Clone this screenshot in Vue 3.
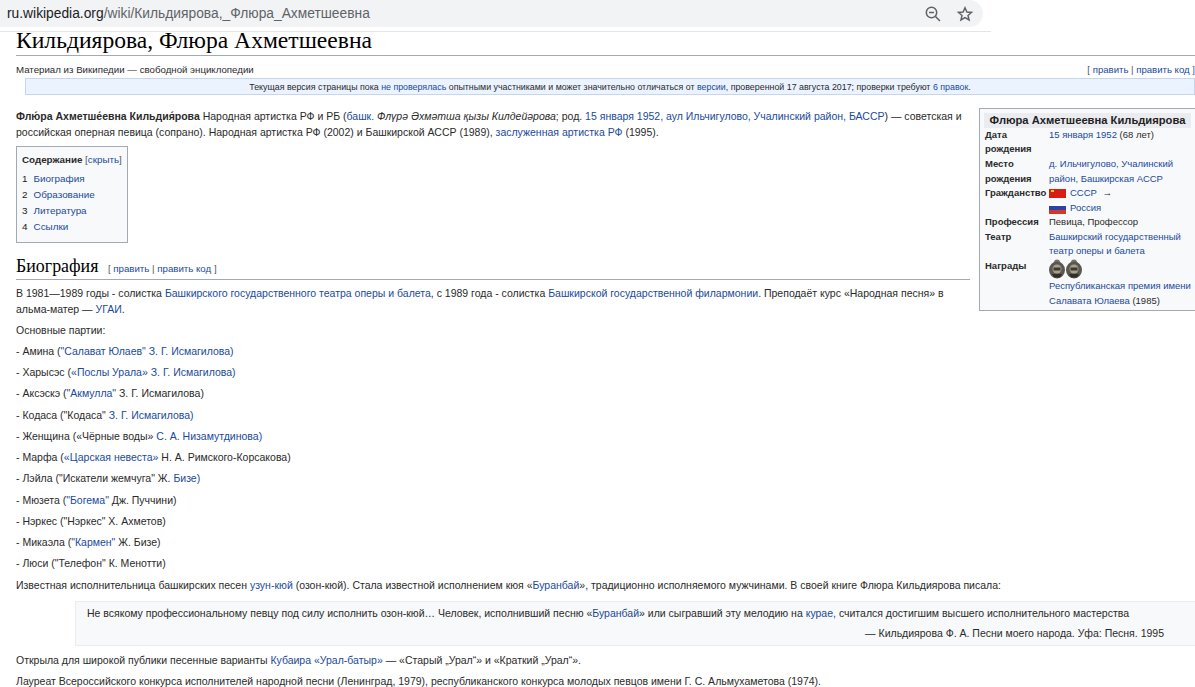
<script setup>
const toc = ['Биография', 'Образование', 'Литература', 'Ссылки']

// партии: before, link, after
const roles = [
  ['- Амина (', '"Салават Юлаев" З. Г. Исмагилова)', ''],
  ['- Харысэс (', '«Послы Урала» З. Г. Исмагилова)', ''],
  ['- Аксэскэ (', '"Акмулла"', ' З. Г. Исмагилова)'],
  ['- Кодаса ("Кодаса" ', 'З. Г. Исмагилова)', ''],
  ['- Женщина («Чёрные воды» ', 'С. А. Низамутдинова)', ''],
  ['- Марфа (', '«Царская невеста»', ' Н. А. Римского-Корсакова)'],
  ['- Лэйла ("Искатели жемчуга" Ж. ', 'Бизе)', ''],
  ['- Мюзета (', '"Богема"', ' Дж. Пуччини)'],
  ['- Нэркес ("Нэркес" Х. Ахметов)', '', ''],
  ['- Микаэла (', '"Кармен"', ' Ж. Бизе)'],
  ['- Люси ("Телефон" К. Менотти)', '', '']
]
</script>

<template>
  <div class="page">
    <div class="urlrow">
      <div class="urlbar">
        <span class="url"><b>ru.wikipedia.org</b>/wiki/Кильдиярова,_Флюра_Ахметшеевна</span>
        <svg class="icon" width="18" height="18" viewBox="0 0 18 18" fill="none" stroke="#5f6368" stroke-width="1.5">
          <circle cx="7.5" cy="7.5" r="5.2" />
          <path d="M11.5 11.5 16 16M5 7.5h5" />
        </svg>
        <svg class="icon star" width="18" height="18" viewBox="0 0 18 18" fill="none" stroke="#5f6368" stroke-width="1.5">
          <path d="M9 2.8l1.9 4.2 4.6.45-3.5 3 1.05 4.5L9 12.55l-4.05 2.4L6 10.45l-3.5-3 4.6-.45z" />
        </svg>
      </div>
    </div>

    <div class="content">
      <h1>Кильдиярова, Флюра Ахметшеевна</h1>
      <div class="subrow">
        <span>Материал из Википедии — свободной энциклопедии</span>
        <span class="edit">[ <a>править</a> | <a>править код</a> ]</span>
      </div>
      <div class="notice">
        Текущая версия страницы пока <a>не проверялась</a> опытными участниками и может значительно отличаться от <a>версии</a>, проверенной 17 августа 2017; проверки требуют <a>6 правок</a>.
      </div>

      <div class="infobox">
        <div class="ib-title">Флюра Ахметшеевна Кильдиярова</div>
        <div class="ib-grid">
          <b>Дата рождения</b>
          <div><a>15 января 1952</a> (68 лет)</div>
          <b>Место рождения</b>
          <div><a>д. Ильчигулово, Учалинский район, Башкирская АССР</a></div>
          <b>Гражданство</b>
          <div>
            <div class="flagrow">
              <svg class="flag" width="17" height="9" viewBox="0 0 17 9">
                <rect width="17" height="9" fill="#d81e12" />
                <rect x="2" y="1" width="3" height="2" fill="#f2c230" />
              </svg>
              <a>СССР</a>&nbsp;→
            </div>
            <div class="flagrow">
              <svg class="flag" width="17" height="12" viewBox="0 0 17 12">
                <rect width="17" height="12" fill="#fff" stroke="#e4e4e4" stroke-width="0.5" />
                <rect y="4" width="17" height="4" fill="#2a45a8" />
                <rect y="8" width="17" height="4" fill="#d8352a" />
              </svg>
              <a>Россия</a>
            </div>
          </div>
          <b>Профессия</b>
          <div>Певица, Профессор</div>
          <b>Театр</b>
          <div><a>Башкирский государственный театр оперы и балета</a></div>
          <b>Награды</b>
          <div>
            <div class="medals">
              <svg v-for="n in 2" :key="n" width="16" height="20" viewBox="0 0 16 20">
                <circle cx="8" cy="3.5" r="3" fill="#77766c" />
                <ellipse cx="8" cy="11" rx="8" ry="8.5" fill="#5a5850" />
                <circle cx="8" cy="10" r="4.5" fill="#a89f8a" />
                <rect x="4.5" y="8.5" width="7" height="3" fill="#3c3a34" />
                <path d="M3 15h10l-2 3.5H5z" fill="#2f2e2a" />
              </svg>
            </div>
            <a>Республиканская премия имени Салавата Юлаева</a> (1985)
          </div>
        </div>
      </div>

      <p class="lead">
        <b>Флю́ра Ахметше́евна Кильдия́рова</b> Народная артистка РФ и РБ (<a>башк.</a> <i>Флүрә Әхмәтша қызы Килдейәрова</i>; род. <a>15 января 1952, аул Ильчигулово, Учалинский район, БАССР</a>) — советская и российская оперная певица (сопрано). Народная артистка РФ (2002) и Башкирской АССР (1989), <a>заслуженная артистка РФ</a> (1995).
      </p>

      <div class="toc">
        <div class="toc-title"><b>Содержание</b> <span class="toggle">[<a>скрыть</a>]</span></div>
        <div v-for="(item, i) in toc" :key="item" class="toc-item">
          <span class="num">{{ i + 1 }}</span><a>{{ item }}</a>
        </div>
      </div>

      <h2>Биография <span class="edit">[ <a>править</a> | <a>править код</a> ]</span></h2>

      <p class="tight">В 1981—1989 годы - солистка <a>Башкирского государственного театра оперы и балета</a>, с 1989 года - солистка <a>Башкирской государственной филармонии</a>. Преподаёт курс «Народная песня» в альма-матер — <a>УГАИ</a>.</p>
      <p>Основные партии:</p>
      <p v-for="r in roles" :key="r[0]">{{ r[0] }}<a>{{ r[1] }}</a>{{ r[2] }}</p>
      <p>Известная исполнительница башкирских песен <a>узун-кюй</a> (озон-кюй). Стала известной исполнением кюя «<a>Буранбай</a>», традиционно исполняемого мужчинами. В своей книге Флюра Кильдиярова писала:</p>

      <div class="quote">
        <div>Не всякому профессиональному певцу под силу исполнить озон-кюй… Человек, исполнивший песню «<a>Буранбай</a>» или сыгравший эту мелодию на <a>курае,</a> считался достигшим высшего исполнительного мастерства</div>
        <div class="source">— Кильдиярова Ф. А. Песни моего народа. Уфа: Песня. 1995</div>
      </div>

      <p>Открыла для широкой публики песенные варианты <a>Кубаира</a> <a>«Урал-батыр»</a> — «Старый „Урал“» и «Краткий „Урал“».</p>
      <p>Лауреат Всероссийского конкурса исполнителей народной песни (Ленинград, 1979), республиканского конкурса молодых певцов имени Г. С. Альмухаметова (1974).</p>
    </div>
  </div>
</template>

<style scoped>
.page {
  height: 687px;
  overflow: hidden;
  font-family: "Liberation Sans", Arial, sans-serif;
  font-size: 10.5px;
  line-height: 16px;
  color: #2a2a2a;
}

a {
  color: #1a4a9c;
}

.urlrow {
  width: 991px;
  height: 31px;
  border-bottom: 1px solid #e4e5e7;
}

.urlbar {
  width: 983px;
  height: 27px;
  background: #f1f3f4;
  border-radius: 0 14px 14px 0;
  display: flex;
  align-items: center;
  padding: 0 9px 0 7px;
  box-sizing: border-box;
  gap: 14px;
}

.url {
  flex: 1;
  font-size: 13.8px;
  color: #5f6368;
}

.url b {
  font-weight: normal;
  color: #202124;
}

.content {
  padding-left: 16px;
}

h1 {
  margin: -2px 0 0;
  font-family: "Liberation Serif", serif;
  font-weight: normal;
  font-size: 23.6px;
  line-height: 21px;
  height: 25px;
  color: #000;
  border-bottom: 1px solid #a2a9b1;
}

.subrow {
  display: flex;
  justify-content: space-between;
  font-size: 9.7px;
  line-height: 13px;
  margin-top: 7px;
}

.edit {
  font-size: 9.6px;
  color: #54595d;
}

.notice {
  margin: 2px 0 0 9px;
  height: 17px;
  line-height: 16px;
  background: #eaf3ff;
  border: 1px solid #c8d6ea;
  box-sizing: border-box;
  text-align: center;
  font-size: 8.85px;
}

.infobox {
  float: right;
  width: 216px;
  box-sizing: border-box;
  margin: 13px 0 0 9px;
  border: 1px solid #a2a9b1;
  border-right: none;
  background: #f8f9fa;
  padding: 4px 4px 2px 4px;
  font-size: 9.5px;
  line-height: 14.4px;
}

.ib-title {
  background: #eaecf0;
  font-weight: bold;
  font-size: 11.2px;
  line-height: 15px;
  text-align: center;
  white-space: nowrap;
  color: #222;
}

.ib-grid {
  display: grid;
  grid-template-columns: 60px 1fr;
  column-gap: 4px;
  row-gap: 0.3px;
  padding-left: 1px;
}

.flagrow {
  display: flex;
  align-items: center;
  gap: 3px;
}

.flag {
  margin-right: 1px;
}

.medals {
  display: flex;
  gap: 1px;
  height: 20px;
}

p {
  margin: 0;
  padding: 2.63px 0;
}

.lead {
  margin-top: 13px;
  padding: 0;
}

.toc {
  display: inline-block;
  margin-top: 6px;
  width: 112px;
  height: 97px;
  border: 1px solid #a2a9b1;
  background: #f8f9fa;
  padding: 5px 5px;
  box-sizing: border-box;
  font-size: 9.9px;
}

.toc-title {
  line-height: 16px;
  margin-bottom: 3px;
  white-space: nowrap;
  font-size: 9.8px;
}

.toggle {
  color: #54595d;
}

.toc-item {
  line-height: 16px;
}

.num {
  display: inline-block;
  width: 11.5px;
  color: #222;
}

h2 {
  overflow: hidden;
  margin: 13px 0 5px;
  font-family: "Liberation Serif", serif;
  font-weight: normal;
  font-size: 17.9px;
  line-height: 21px;
  color: #000;
  border-bottom: 1px solid #a2a9b1;
}

h2 .edit {
  font-family: "Liberation Sans", Arial, sans-serif;
  font-size: 9.7px;
  margin-left: 5px;
}

.tight {
  padding: 0 0 2px;
}

.quote {
  margin: 6px 0 0 59px;
  height: 45px;
  padding: 3px 31px 0 11px;
  background: #f8f9fa;
  border: 1px solid #eaecf0;
  border-width: 1px 0 1px 1px;
  box-sizing: border-box;
}

.source {
  text-align: right;
  margin-top: 4px;
}

.quote + p {
  margin-top: 3px;
}
</style>

<style>
body {
  margin: 0;
  overflow: hidden;
}
</style>
